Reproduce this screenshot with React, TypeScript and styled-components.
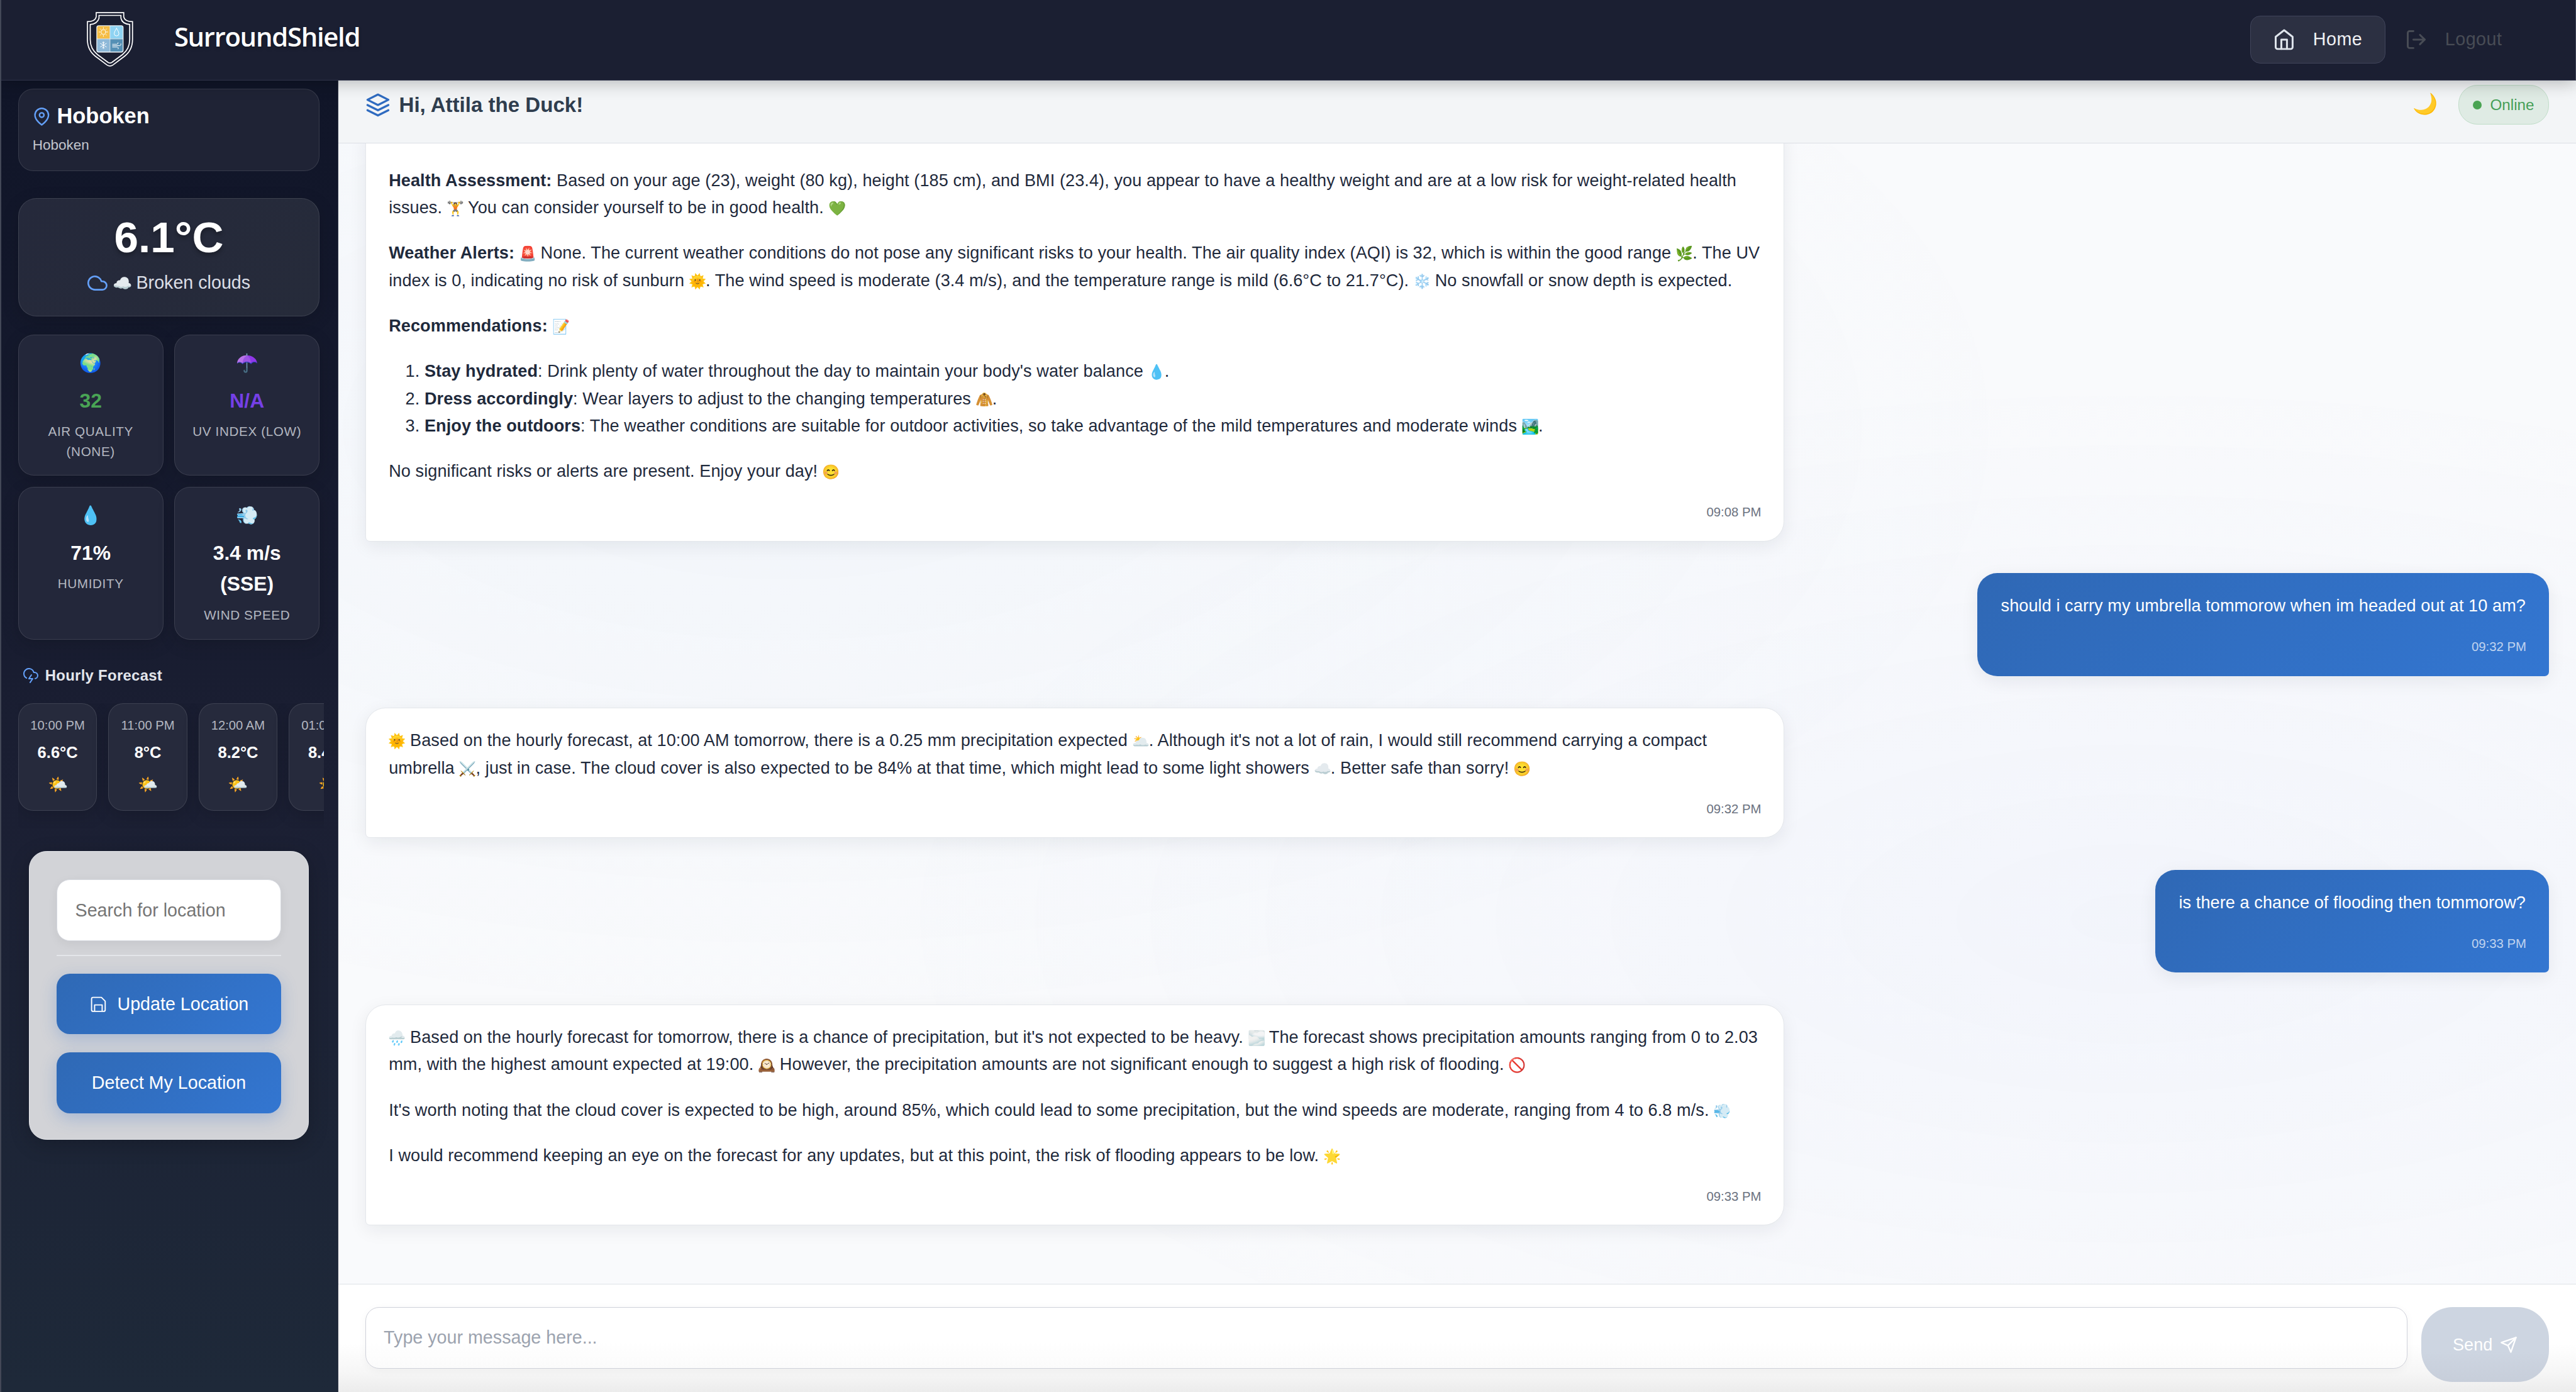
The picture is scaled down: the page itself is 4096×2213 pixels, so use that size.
import React from 'react';
import styled, { createGlobalStyle, css } from 'styled-components';
import { FiMapPin, FiCloud, FiCloudLightning, FiLayers, FiHome, FiLogOut, FiSend } from 'react-icons/fi';

const GlobalStyle = createGlobalStyle`
  * { box-sizing: border-box; }
  html, body { margin: 0; padding: 0; overflow: hidden; background: #111629; }
  p, h1, h2, ol { margin: 0; padding: 0; }
  button, input { font-family: inherit; }
`;

const sans = '"Liberation Sans", Arial, Helvetica, sans-serif';

const Shell = styled.div`
  zoom: 0.99611;
  width: 4112px;
  height: 2222px;
  display: flex;
  flex-direction: column;
  overflow: hidden;
  border-left: 2.02px solid #434857;
  font-family: ${sans};
  color: #1f2a3c;
`;

/* ---------- top bar ---------- */

const TopBar = styled.header`
  position: relative;
  z-index: 3;
  flex: none;
  height: 128px;
  display: flex;
  align-items: flex-start;
  padding: 19px 116px 0 137px;
  background: #1b1f32;
  border-bottom: 1.02px solid #30344a;
  border-right: 1.02px solid #43475a;
  box-shadow: 0 5px 24px rgba(0, 0, 0, 0.24);
`;

const LogoSvg = styled.svg`
  width: 74px;
  height: 88px;
  flex: none;
`;

const Brand = styled.h1`
  margin: 10px 0 0 65px;
  font: 600 42px/58px "Open Sans", "Noto Sans", sans-serif;
  letter-spacing: -1.3px;
  color: #fff;
  text-shadow: 0 3px 5px rgba(0, 0, 0, 0.3);
`;

const Nav = styled.nav`
  margin-left: auto;
  margin-top: 6px;
  display: flex;
`;

const NavItem = styled.a<{ $active?: boolean }>`
  display: flex;
  align-items: center;
  gap: 28px;
  height: 76px;
  padding: ${p => (p.$active ? '0 36px 0 35px' : '0 0 0 30px')};
  border-radius: 16px;
  border: 1.02px solid ${p => (p.$active ? '#40445a' : 'transparent')};
  background: ${p => (p.$active ? '#2c3042' : 'transparent')};
  color: ${p => (p.$active ? '#f0f1f4' : '#484c55')};
  font-size: 28.8px;
  letter-spacing: 0.5px;
  svg { width: 36px; height: 36px; color: ${p => (p.$active ? '#dfe5ec' : '#484c55')}; }
`;

/* ---------- sidebar ---------- */

const Body = styled.div`
  flex: 1;
  min-height: 0;
  display: flex;
`;

const Sidebar = styled.aside`
  flex: none;
  width: 538px;
  padding: 14px 29px 0 27px;
  background: linear-gradient(180deg, #101528 0%, #1b1f33 55%, #1e2939 100%);
  border-right: 1.02px solid #333a4a;
`;

const glass = css`
  border: 1.02px solid rgba(255, 255, 255, 0.11);
  box-shadow: 0 8px 28px rgba(0, 0, 0, 0.14);
`;

const PlaceCard = styled.section`
  ${glass}
  box-shadow: none;
  height: 131px;
  border-radius: 24px;
  padding: 18px 22px;
  background: #1f2335;
`;

const PlaceTitle = styled.h2`
  display: flex;
  align-items: center;
  gap: 10px;
  font-size: 34.6px;
  line-height: 50px;
  color: #fff;
  svg { width: 28.8px; height: 28.8px; color: #64a0f8; }
`;

const PlaceSub = styled.p`
  margin-top: 3px;
  font-size: 22.6px;
  line-height: 36px;
  color: #c3c6ce;
`;

const TempCard = styled.section`
  ${glass}
  margin-top: 43px;
  height: 189px;
  border-radius: 29px;
  padding-top: 22px;
  text-align: center;
  background: linear-gradient(135deg, #25293b, #262b3a);
`;

const TempValue = styled.div`
  font-size: 69.5px;
  font-weight: 700;
  line-height: 80px;
  color: #fff;
  text-shadow: 0 4px 8px rgba(0, 0, 0, 0.3);
`;

const TempDesc = styled.div`
  margin-top: 10px;
  display: flex;
  align-items: center;
  justify-content: center;
  font-size: 28.8px;
  line-height: 46px;
  color: #dcdfe7;
  svg { width: 32px; height: 32px; color: #64a0f8; margin-right: 10px; }
`;

const Metrics = styled.div`
  margin-top: 29px;
  display: grid;
  grid-template-columns: 1fr 1fr;
  grid-template-rows: 225px 244px;
  gap: 18px;
`;

const MetricCard = styled.div`
  ${glass}
  border-radius: 25px;
  padding: 29px 20px 0;
  display: flex;
  flex-direction: column;
  align-items: center;
  text-align: center;
  background: #23273a;
`;

const MetricValue = styled.div<{ $color?: string }>`
  margin-top: 19px;
  font-size: 32px;
  font-weight: 700;
  line-height: 50px;
  color: ${p => p.$color ?? '#fff'};
`;

const MetricLabel = styled.div`
  margin-top: 8px;
  font-size: 20.8px;
  line-height: 32px;
  letter-spacing: 0.6px;
  text-transform: uppercase;
  color: #b3b7c0;
`;

const HourlyTitle = styled.h2`
  margin: 41px 0 0 8px;
  display: flex;
  align-items: center;
  gap: 11px;
  font-size: 24px;
  line-height: 32px;
  letter-spacing: 0.3px;
  color: #e3e6ec;
  svg { width: 24px; height: 24px; color: #64a0f8; }
`;

const HourlyStrip = styled.div`
  margin: 28px -7px 0 0;
  height: 200px;
  display: flex;
  gap: 18px;
  overflow: hidden;
`;

const HourCard = styled.div`
  ${glass}
  flex: none;
  width: 126px;
  height: 172px;
  border-radius: 24px;
  padding-top: 24px;
  display: flex;
  flex-direction: column;
  align-items: center;
  background: #262a3c;
`;

const HourTime = styled.div`
  font-size: 20.3px;
  line-height: 24px;
  color: #b3b7c0;
`;

const HourTemp = styled.div`
  margin: 14px 0 19px;
  font-size: 25.6px;
  font-weight: 700;
  line-height: 34px;
  color: #fff;
`;

const LocationForm = styled.form`
  margin: 36px 17px 0 17px;
  height: 461px;
  padding: 45px 43px 0;
  border-radius: 28px;
  border: 1.02px solid #e3e5e9;
  background: #d2d3d7;
  box-shadow: 0 8px 32px rgba(0, 0, 0, 0.2);
  display: flex;
  flex-direction: column;
`;

const SearchInput = styled.input`
  height: 98px;
  width: 100%;
  padding: 0 29px;
  border: 1.02px solid #d6d9e0;
  border-radius: 21px;
  outline: none;
  background: #fff;
  font-size: 28.8px;
  box-shadow: 0 5px 16px rgba(0, 0, 0, 0.06);
  &::placeholder { color: #757575; opacity: 1; }
`;

const Divider = styled.div`
  margin: 22px 0 28px;
  height: 2px;
  background: #e4e6ea;
`;

const BlueButton = styled.button`
  height: 97px;
  margin-bottom: 29px;
  border: 0;
  border-radius: 21px;
  display: flex;
  align-items: center;
  justify-content: center;
  gap: 16px;
  color: #fff;
  font-size: 28.8px;
  background: linear-gradient(135deg, #2f69b5, #3376d1);
  box-shadow: 0 8px 26px rgba(49, 107, 200, 0.27);
  svg { width: 29px; height: 29px; }
`;

/* ---------- chat ---------- */

const Chat = styled.main`
  flex: 1;
  min-width: 0;
  display: flex;
  flex-direction: column;
`;

const ChatHeader = styled.div`
  flex: none;
  height: 101px;
  padding: 8px 43px 0 43px;
  display: flex;
  align-items: flex-start;
  background: #f3f5f7;
  border-bottom: 1.02px solid #dcdfe6;
`;

const Greeting = styled.h2`
  margin-top: 7px;
  display: flex;
  align-items: center;
  gap: 14px;
  font-size: 33.2px;
  line-height: 50px;
  color: #2f3d4e;
  svg { width: 40px; height: 40px; color: #2f6bc0; }
`;

const StatusArea = styled.div`
  margin-left: auto;
  display: flex;
  align-items: flex-start;
  gap: 35px;
`;

const ThemeToggle = styled.div`
  padding-top: 12px;
`;

const OnlinePill = styled.div`
  width: 145px;
  height: 63px;
  display: flex;
  align-items: center;
  padding-left: 22px;
  gap: 14px;
  border-radius: 30px;
  border: 1.02px solid #c0ddc8;
  background: #dfebe4;
  color: #469f57;
  font-size: 24.3px;
  &::before {
    content: '';
    width: 14px;
    height: 14px;
    border-radius: 50%;
    background: #4aa453;
  }
`;

const Messages = styled.div`
  flex: 1;
  min-height: 0;
  overflow: hidden;
  display: flex;
  flex-direction: column;
  justify-content: flex-end;
  gap: 50.7px;
  padding: 0 43px 93px 43px;
  background:
    radial-gradient(ellipse at 20% 25%, rgba(66, 133, 214, 0.04), transparent 50%),
    radial-gradient(ellipse at 80% 68%, rgba(99, 132, 241, 0.045), transparent 50%),
    #f9fafc;
`;

const Bubble = styled.article<{ $mine?: boolean; $scrolled?: boolean }>`
  flex: none;
  align-self: ${p => (p.$mine ? 'flex-end' : 'flex-start')};
  width: ${p => (p.$mine ? 'auto' : '2265px')};
  padding: ${p => (p.$scrolled ? '72px' : p.$mine ? '30.2px' : '29.2px')} ${p => (p.$mine ? '37.4px' : '36.6px')} ${p => (p.$mine ? '28.6px' : '27.6px')} ${p => (p.$mine ? '37.4px' : '36.6px')};
  border-radius: ${p => (p.$mine ? '32px 32px 7px 32px' : '32px 32px 32px 7px')};
  border: ${p => (p.$mine ? '0' : '1.02px solid #e4e7eb')};
  background: ${p => (p.$mine ? 'linear-gradient(135deg, #2f68b5, #3376d1)' : '#fff')};
  color: ${p => (p.$mine ? '#fff' : '#1f2a3c')};
  box-shadow: 0 8px 28px rgba(15, 23, 42, 0.07);
  font-size: 27.2px;
  line-height: 43.52px;
  letter-spacing: 0.08px;
`;

const Para = styled.p`
  margin-bottom: 29.1px;
  &:last-of-type { margin-bottom: 26.5px; }
`;

const List = styled.ol`
  margin-bottom: 29.1px;
  padding-left: 57px;
`;

const Time = styled.time<{ $mine?: boolean }>`
  display: block;
  text-align: right;
  font-size: 20.4px;
  line-height: 35.4px;
  letter-spacing: 0;
  margin-right: -1px;
  color: ${p => (p.$mine ? 'rgba(255,255,255,0.7)' : '#6b7280')};
`;

const EmojiBox = styled.span<{ $size: number; $tan?: boolean }>`
  display: inline-flex;
  justify-content: center;
  width: ${p => p.$size}px;
  font-size: ${p => p.$size * 0.86}px;
  line-height: 1;
  letter-spacing: 0;
  white-space: nowrap;
  filter: ${p => (p.$tan ? 'hue-rotate(200deg) brightness(2.3) saturate(0.65)' : 'none')};
`;

const IconSlot = styled.span<{ $size: number; $purple?: boolean }>`
  display: inline-flex;
  align-items: center;
  justify-content: center;
  width: ${p => p.$size}px;
  height: ${p => p.$size}px;
  font-size: ${p => p.$size * 0.9}px;
  line-height: 1;
  white-space: nowrap;
  margin-right: ${p => (p.$size === 28 ? 8 : 0)}px;
  filter: ${p => (p.$purple ? 'hue-rotate(22deg)' : 'none')};
`;

/* ---------- composer ---------- */

const Composer = styled.div`
  flex: none;
  height: 173px;
  display: flex;
  align-items: flex-start;
  gap: 22px;
  padding: 36px 43px 0 43px;
  border-top: 1.02px solid #dfe3e8;
  background: linear-gradient(180deg, #fff 0%, #fff 55%, #f6f6f6 82%, #ececec 100%);
`;

const MessageInput = styled.input`
  flex: 1;
  height: 98px;
  padding: 0 28.5px;
  border: 1.02px solid #cfd1da;
  border-radius: 22px;
  outline: none;
  background: linear-gradient(180deg, #fff 55%, #fbfbfb);
  font-size: 28.8px;
  box-shadow: 0 4px 14px rgba(0, 0, 0, 0.04);
  &::placeholder { color: #9ca3af; opacity: 1; }
`;

const SendButton = styled.button`
  width: 204px;
  height: 120px;
  border: 0;
  border-radius: 50px;
  display: flex;
  align-items: center;
  justify-content: center;
  gap: 12px;
  color: #fff;
  font-size: 27.2px;
  background: linear-gradient(180deg, #cdd5e1 60%, #c7ceda);
  svg { width: 28px; height: 28px; }
`;

const E = ({ children, tan }: { children: string; tan?: boolean }) => <EmojiBox $size={26.4} $tan={tan}>{children}</EmojiBox>;

const Logo = () => (
  <LogoSvg viewBox="0 0 74 88" fill="none">
    <g stroke="#fff" strokeWidth="1.7">
      <path d="M15 1.2H59V8q2 7.500 14 7.500V44q0 17-12.500 26.500L42 84.500q-5 3.500-10 0L13.500 70.500Q1 61 1 44V15.500Q13 15.500 15 8Z" />
      <path d="M19.500 5.500H54.500V10q2 9 14 10V44q0 15-11.500 24L40 80.500q-3 2-6 0L17 68Q5.500 59 5.500 44V20Q17 19 19.500 10Z" />
    </g>
    <clipPath id="tiles"><rect x="16" y="22" width="42" height="42" rx="3" /></clipPath>
    <g clipPath="url(#tiles)">
      <rect x="16" y="22" width="21" height="21" fill="#f5bd45" />
      <rect x="37" y="22" width="21" height="21" fill="#8fd3f2" />
      <rect x="16" y="43" width="21" height="21" fill="#8db8d8" />
      <rect x="37" y="43" width="21" height="21" fill="#5590b5" />
    </g>
    <g stroke="#eef4f8" strokeWidth="0.9">
      <rect x="16" y="22" width="42" height="42" rx="3" strokeWidth="1.300" />
      <path d="M37 22V64M16 43H58" />
    </g>
    <g stroke="#fff" strokeWidth="1" strokeLinecap="round">
      <circle cx="26.500" cy="32" r="3.800" />
      <path d="M26.500 25v1.500M26.500 37.500V39M19.500 32H21M32 32h1.500M21.500 27l1 1M30.500 36l1 1M31.500 27l-1 1M22.500 36l-1 1" />
      <path d="M47.500 26q-3.800 6-3.800 8.500a3.800 3.800 0 0 0 7.600 0q0-2.500-3.800-8.500Z" />
      <path d="M26.500 47.500v11M21.700 50.200l9.600 5.600M31.300 50.200l-9.600 5.600M24.800 48.500l1.700 1.500 1.700-1.500M24.800 57.500l1.700-1.500 1.700 1.500" />
      <path d="M41 51.500h7q2.500-.3 2-2.500M41 53.800h12q2-.5 1.500-3M41 56h7.500q3 .5 1.500 3" />
    </g>
  </LogoSvg>
);

const SaveIcon = () => (
  <svg viewBox="0 0 24 24" fill="none" stroke="currentColor" strokeWidth="1.600" strokeLinecap="round" strokeLinejoin="round">
    <path d="M19 21.500H5a2 2 0 0 1-2-2V5a2 2 0 0 1 2-2h11l5 5v11.500a2 2 0 0 1-2 2z" />
    <path d="M17 21v-8H7v8" />
  </svg>
);

const metrics = [
  { icon: '🌍', value: '32', label: 'Air Quality (None)', color: '#49a455' },
  { icon: '☂️', value: 'N/A', label: 'UV Index (Low)', color: '#7540e6', purple: true },
  { icon: '💧', value: '71%', label: 'Humidity' },
  { icon: '💨', value: '3.4 m/s (SSE)', label: 'Wind Speed' },
];

const hours = [
  { time: '10:00 PM', temp: '6.6°C' },
  { time: '11:00 PM', temp: '8°C' },
  { time: '12:00 AM', temp: '8.2°C' },
  { time: '01:00 AM', temp: '8.4°C' },
];

export default function App() {
  return (
    <>
      <GlobalStyle />
      <Shell>
        <TopBar>
          <Logo />
          <Brand>SurroundShield</Brand>
          <Nav>
            <NavItem $active><FiHome />Home</NavItem>
            <NavItem><FiLogOut />Logout</NavItem>
          </Nav>
        </TopBar>
        <Body>
          <Sidebar>
            <PlaceCard>
              <PlaceTitle><FiMapPin />Hoboken</PlaceTitle>
              <PlaceSub>Hoboken</PlaceSub>
            </PlaceCard>
            <TempCard>
              <TempValue>6.1°C</TempValue>
              <TempDesc><FiCloud /><IconSlot $size={28}>☁️</IconSlot>Broken clouds</TempDesc>
            </TempCard>
            <Metrics>
              {metrics.map(m => (
                <MetricCard key={m.label}>
                  <IconSlot $size={32} $purple={m.purple}>{m.icon}</IconSlot>
                  <MetricValue $color={m.color}>{m.value}</MetricValue>
                  <MetricLabel>{m.label}</MetricLabel>
                </MetricCard>
              ))}
            </Metrics>
            <HourlyTitle><FiCloudLightning />Hourly Forecast</HourlyTitle>
            <HourlyStrip>
              {hours.map(h => (
                <HourCard key={h.time}>
                  <HourTime>{h.time}</HourTime>
                  <HourTemp>{h.temp}</HourTemp>
                  <IconSlot $size={28.8}>🌤️</IconSlot>
                </HourCard>
              ))}
            </HourlyStrip>
            <LocationForm>
              <SearchInput placeholder="Search for location" />
              <Divider />
              <BlueButton type="button"><SaveIcon />Update Location</BlueButton>
              <BlueButton type="button">Detect My Location</BlueButton>
            </LocationForm>
          </Sidebar>
          <Chat>
            <ChatHeader>
              <Greeting><FiLayers />Hi, Attila the Duck!</Greeting>
              <StatusArea>
                <ThemeToggle><IconSlot $size={36}>🌙</IconSlot></ThemeToggle>
                <OnlinePill>Online</OnlinePill>
              </StatusArea>
            </ChatHeader>
            <Messages>
              <Bubble $scrolled>
                <Para><b>Health Assessment:</b> Based on your age (23), weight (80 kg), height (185 cm), and BMI (23.4), you appear to have a healthy weight and are at a low risk for weight-related health issues. <E>🏋️</E> You can consider yourself to be in good health. <E>💚</E></Para>
                <Para><b>Weather Alerts:</b> <E>🚨</E> None. The current weather conditions do not pose any significant risks to your health. The air quality index (AQI) is 32, which is within the good range <E>🌿</E>. The UV index is 0, indicating no risk of sunburn <E>🌞</E>. The wind speed is moderate (3.4 m/s), and the temperature range is mild (6.6°C to 21.7°C). <E>❄️</E> No snowfall or snow depth is expected.</Para>
                <Para><b>Recommendations:</b> <E>📝</E></Para>
                <List>
                  <li><b>Stay hydrated</b>: Drink plenty of water throughout the day to maintain your body's water balance <E>💧</E>.</li>
                  <li><b>Dress accordingly</b>: Wear layers to adjust to the changing temperatures <E tan>🧥</E>.</li>
                  <li><b>Enjoy the outdoors</b>: The weather conditions are suitable for outdoor activities, so take advantage of the mild temperatures and moderate winds <E>🏞️</E>.</li>
                </List>
                <Para>No significant risks or alerts are present. Enjoy your day! <E>😊</E></Para>
                <Time>09:08 PM</Time>
              </Bubble>
              <Bubble $mine>
                <Para>should i carry my umbrella tommorow when im headed out at 10 am?</Para>
                <Time $mine>09:32 PM</Time>
              </Bubble>
              <Bubble>
                <Para><E>🌞</E> Based on the hourly forecast, at 10:00 AM tomorrow, there is a 0.25 mm precipitation expected <E>🌥️</E>. Although it's not a lot of rain, I would still recommend carrying a compact umbrella <E>⚔️</E>, just in case. The cloud cover is also expected to be 84% at that time, which might lead to some light showers <E>☁️</E>. Better safe than sorry! <E>😊</E></Para>
                <Time>09:32 PM</Time>
              </Bubble>
              <Bubble $mine>
                <Para>is there a chance of flooding then tommorow?</Para>
                <Time $mine>09:33 PM</Time>
              </Bubble>
              <Bubble>
                <Para><E>🌧️</E> Based on the hourly forecast for tomorrow, there is a chance of precipitation, but it's not expected to be heavy. <E>🌫️</E> The forecast shows precipitation amounts ranging from 0 to 2.03 mm, with the highest amount expected at 19:00. <E>🕰️</E> However, the precipitation amounts are not significant enough to suggest a high risk of flooding. <E>🚫</E></Para>
                <Para>It's worth noting that the cloud cover is expected to be high, around 85%, which could lead to some precipitation, but the wind speeds are moderate, ranging from 4 to 6.8 m/s. <E>💨</E></Para>
                <Para>I would recommend keeping an eye on the forecast for any updates, but at this point, the risk of flooding appears to be low. <E>🌟</E></Para>
                <Time>09:33 PM</Time>
              </Bubble>
            </Messages>
            <Composer>
              <MessageInput placeholder="Type your message here..." />
              <SendButton type="button">Send<FiSend /></SendButton>
            </Composer>
          </Chat>
        </Body>
      </Shell>
    </>
  );
}
